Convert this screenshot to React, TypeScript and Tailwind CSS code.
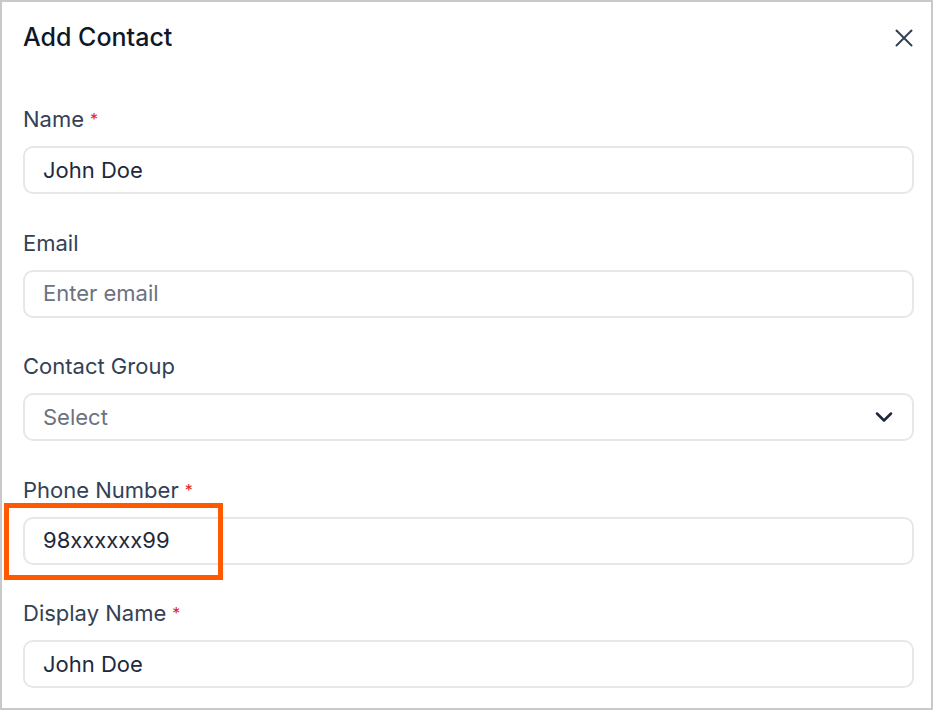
import { ChevronDown, X } from "lucide-react";

type Field = {
    label: string;
    required?: boolean;
    value?: string;
    placeholder?: string;
    select?: boolean;
    highlight?: boolean;
};

const fields: Field[] = [
    { label: "Name", required: true, value: "John Doe" },
    { label: "Email", placeholder: "Enter email" },
    { label: "Contact Group", placeholder: "Select", select: true },
    { label: "Phone Number", required: true, value: "98xxxxxx99", highlight: true },
    { label: "Display Name", required: true, value: "John Doe" },
];

export default function App() {
    return (
        <div
            className="w-[933px] h-[710px] border-2 border-[#c9c9c9] bg-white overflow-hidden"
            style={{ fontFamily: "Inter, 'Noto Sans', sans-serif" }}
        >
            <div className="pl-[21px] pr-[17px] pt-[21px]">
                {/* Header */}
                <div className="flex items-center justify-between h-7">
                    <h2 className="text-[25px] font-medium text-[#0f172a] leading-7">Add Contact</h2>
                    <X className="w-[30px] h-[30px] text-[#334155] mr-[-5px] mt-[2px]" strokeWidth={1.6} />
                </div>

                {/* Form */}
                <div className="mt-[54px] flex flex-col gap-[34.5px]">
                    {fields.map(f => (
                        <div key={f.label} className="flex flex-col gap-[13px]">
                            <label className="text-[22px] leading-7 text-[#334155]">
                                {f.label}
                                {f.required && <span className="text-[#dc2626] ml-[6px] text-[16px] align-top">*</span>}
                            </label>
                            <div className="relative">
                                <div className="h-[48px] w-[891px] rounded-[10px] border-2 border-[#e5e7eb] flex items-center justify-between pl-[18px] pr-[14px]">
                                    <span
                                        className={`text-[22px] ${f.value ? "text-[#1e293b]" : "text-[#6b7280]"}`}
                                    >
                                        {f.value ?? f.placeholder}
                                    </span>
                                    {f.select && <ChevronDown className="w-[28px] h-[28px] text-[#1e293b]" strokeWidth={2.2} />}
                                </div>
                                {f.highlight && (
                                    <div className="absolute left-[-19px] top-[-14px] w-[219px] h-[77px] border-[5px] border-[#ff5a00] pointer-events-none" />
                                )}
                            </div>
                        </div>
                    ))}
                </div>
            </div>
        </div>
    );
}
